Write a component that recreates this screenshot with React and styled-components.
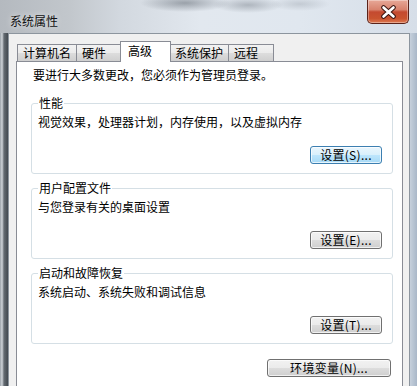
import styled, { createGlobalStyle } from "styled-components";

const GlobalStyle = createGlobalStyle`
	* { box-sizing: border-box; }
	body {
		margin: 0;
		font-family: "Noto Sans CJK SC", "Noto Sans", sans-serif;
		font-size: 12px;
		color: #000;
	}
`;

const tabs = ["计算机名", "硬件", "高级", "系统保护", "远程"];

const groups = [
	{ title: "性能", text: "视觉效果，处理器计划，内存使用，以及虚拟内存", button: "设置(S)...", isDefault: true },
	{ title: "用户配置文件", text: "与您登录有关的桌面设置", button: "设置(E)..." },
	{ title: "启动和故障恢复", text: "系统启动、系统失败和调试信息", button: "设置(T)..." },
];

function CloseIcon() {
	return (
		<svg width="17" height="14" viewBox="0 0 17 14">
			<path d="M3.5 2.5 L13.5 11.5 M13.5 2.5 L3.5 11.5" stroke="#3a1510" strokeWidth="4.6" strokeLinecap="round" />
			<path d="M3.5 2.5 L13.5 11.5 M13.5 2.5 L3.5 11.5" stroke="#ffffff" strokeWidth="2.6" strokeLinecap="round" />
		</svg>
	);
}

export default function App() {
	return (
		<>
			<GlobalStyle />
			<ScWindow>
				<ScTitleBar>
					<ScTitle>系统属性</ScTitle>
					<ScClose>
						<CloseIcon />
					</ScClose>
				</ScTitleBar>
				<ScFrame>
					<ScLeftEdge />
					<ScBody>
						<ScTabRow>
							{tabs.map((tab, i) => (
								<ScTab key={tab} $active={tab === "高级"} $first={i === 0}>
									{tab}
								</ScTab>
							))}
						</ScTabRow>
						<ScPanel>
							<ScIntro>要进行大多数更改，您必须作为管理员登录。</ScIntro>
							{groups.map((group, i) => (
								<ScGroup key={group.title} $first={i === 0}>
									<ScLegend>{group.title}</ScLegend>
									<ScGroupText>{group.text}</ScGroupText>
									<ScButtonRow>
										<ScButton $width={72} $default={group.isDefault}>
											{group.button}
										</ScButton>
									</ScButtonRow>
								</ScGroup>
							))}
							<ScFooter>
								<ScButton $width={124}>环境变量(N)...</ScButton>
							</ScFooter>
						</ScPanel>
					</ScBody>
					<ScRightEdge />
				</ScFrame>
			</ScWindow>
		</>
	);
}

const ScWindow = styled.div`
	width: 417px;
	height: 386px;
	overflow: hidden;
	display: flex;
	flex-direction: column;
	background: #c9d2dc;
`;

const ScTitleBar = styled.div`
	height: 33px;
	flex-shrink: 0;
	display: flex;
	align-items: flex-start;
	background:
		radial-gradient(ellipse 45px 9px at 185px 3px, rgba(70, 78, 88, 0.45), transparent),
		radial-gradient(ellipse 35px 8px at 248px 5px, rgba(80, 88, 98, 0.35), transparent),
		radial-gradient(ellipse 30px 7px at 300px 4px, rgba(110, 118, 128, 0.25), transparent),
		linear-gradient(to right, #b4b9bf 0, #c2c7cc 70px, #d2d8df 120px, #e2e8ef 200px, #e0e7ef 300px, #d6dee8 417px);
`;

const ScTitle = styled.div`
	margin: 13px 0 0 10px;
	line-height: 16px;
	color: #111;
	text-shadow: 0 0 6px rgba(255, 255, 255, 0.8);
`;

const ScClose = styled.div`
	margin: 0 8px 0 auto;
	width: 42px;
	height: 24px;
	display: flex;
	align-items: center;
	justify-content: center;
	border: 1px solid #5a2219;
	border-top: none;
	border-radius: 0 0 5px 5px;
	background: linear-gradient(#e7a898 0%, #d8826d 42%, #c44a30 52%, #c9532f 80%, #de7a52 100%);
	box-shadow: inset 0 0 0 1px rgba(255, 255, 255, 0.35);
`;

const ScFrame = styled.div`
	display: flex;
	align-items: stretch;
`;

const ScLeftEdge = styled.div`
	width: 8px;
	flex-shrink: 0;
	background: linear-gradient(to right, #9aa1a8 0, #d0d5da 2px, #646b72 4px, #424950 8px);
`;

const ScRightEdge = styled.div`
	width: 7px;
	flex-shrink: 0;
	background: linear-gradient(to right, #c6d0dc 0, #b5c2d1 4px, #a9b7c8 7px);
`;

const ScBody = styled.div`
	flex: 1;
	background: #f0f0f0;
	border: 1px solid #8c959e;
	border-bottom: none;
	padding: 7px 6px 0 7px;
`;

const ScTabRow = styled.div`
	height: 20px;
	display: flex;
	align-items: flex-end;
	padding-left: 1px;
`;

const ScTab = styled.div`
	position: relative;
	height: ${(p) => (p.$active ? "21px" : "17px")};
	min-width: ${(p) => (p.$active ? "51px" : "46px")};
	margin-left: ${(p) => (p.$active ? "-2px" : p.$first ? "0" : "-1px")};
	margin-right: ${(p) => (p.$active ? "-1px" : "0")};
	margin-bottom: ${(p) => (p.$active ? "-1px" : "0")};
	z-index: ${(p) => (p.$active ? 1 : 0)};
	padding: ${(p) => (p.$active ? "1px 7px 0" : "0 5px")};
	border: 1px solid #898c95;
	border-bottom: none;
	line-height: 16px;
	white-space: nowrap;
	background: ${(p) => (p.$active ? "#fff" : "linear-gradient(#f2f2f2, #ebebeb 50%, #dddddd 50%, #cfcfcf)")};
`;

const ScPanel = styled.div`
	background: #fff;
	border: 1px solid #898c95;
	padding: 5px 9px 24px 14px;
	display: flex;
	flex-direction: column;
`;

const ScIntro = styled.div`
	line-height: 16px;
	padding-left: 2px;
`;

const ScGroup = styled.div`
	margin-top: ${(p) => (p.$first ? "20px" : "14px")};
	border: 1px solid #d5dfe5;
	border-radius: 3px;
	padding: 0 10px 9px 6px;
`;

const ScLegend = styled.div`
	width: fit-content;
	margin-top: -9px;
	padding: 0 1px;
	line-height: 16px;
	background: #fff;
`;

const ScGroupText = styled.div`
	margin-top: 3px;
	line-height: 16px;
`;

const ScButtonRow = styled.div`
	display: flex;
	justify-content: flex-end;
	margin-top: 16px;
`;

const ScButton = styled.button`
	width: ${(p) => p.$width}px;
	height: 18px;
	padding: 0;
	font-family: "Noto Sans CJK SC", "Noto Sans", sans-serif;
	font-size: 12px;
	line-height: 14px;
	letter-spacing: 0.3px;
	color: #000;
	border-radius: 3px;
	border: 1px solid ${(p) => (p.$default ? "#3c7fb1" : "#707070")};
	background: ${(p) =>
		p.$default
			? "linear-gradient(#eaf6fd, #d9f0fc 50%, #bee6fd 50%, #a7d9f5)"
			: "linear-gradient(#f2f2f2, #ebebeb 50%, #dddddd 50%, #cfcfcf)"};
	box-shadow: inset 0 0 0 1px rgba(255, 255, 255, 0.7);
`;

const ScFooter = styled.div`
	display: flex;
	justify-content: flex-end;
	margin: 15px 2px 0 0;
`;
